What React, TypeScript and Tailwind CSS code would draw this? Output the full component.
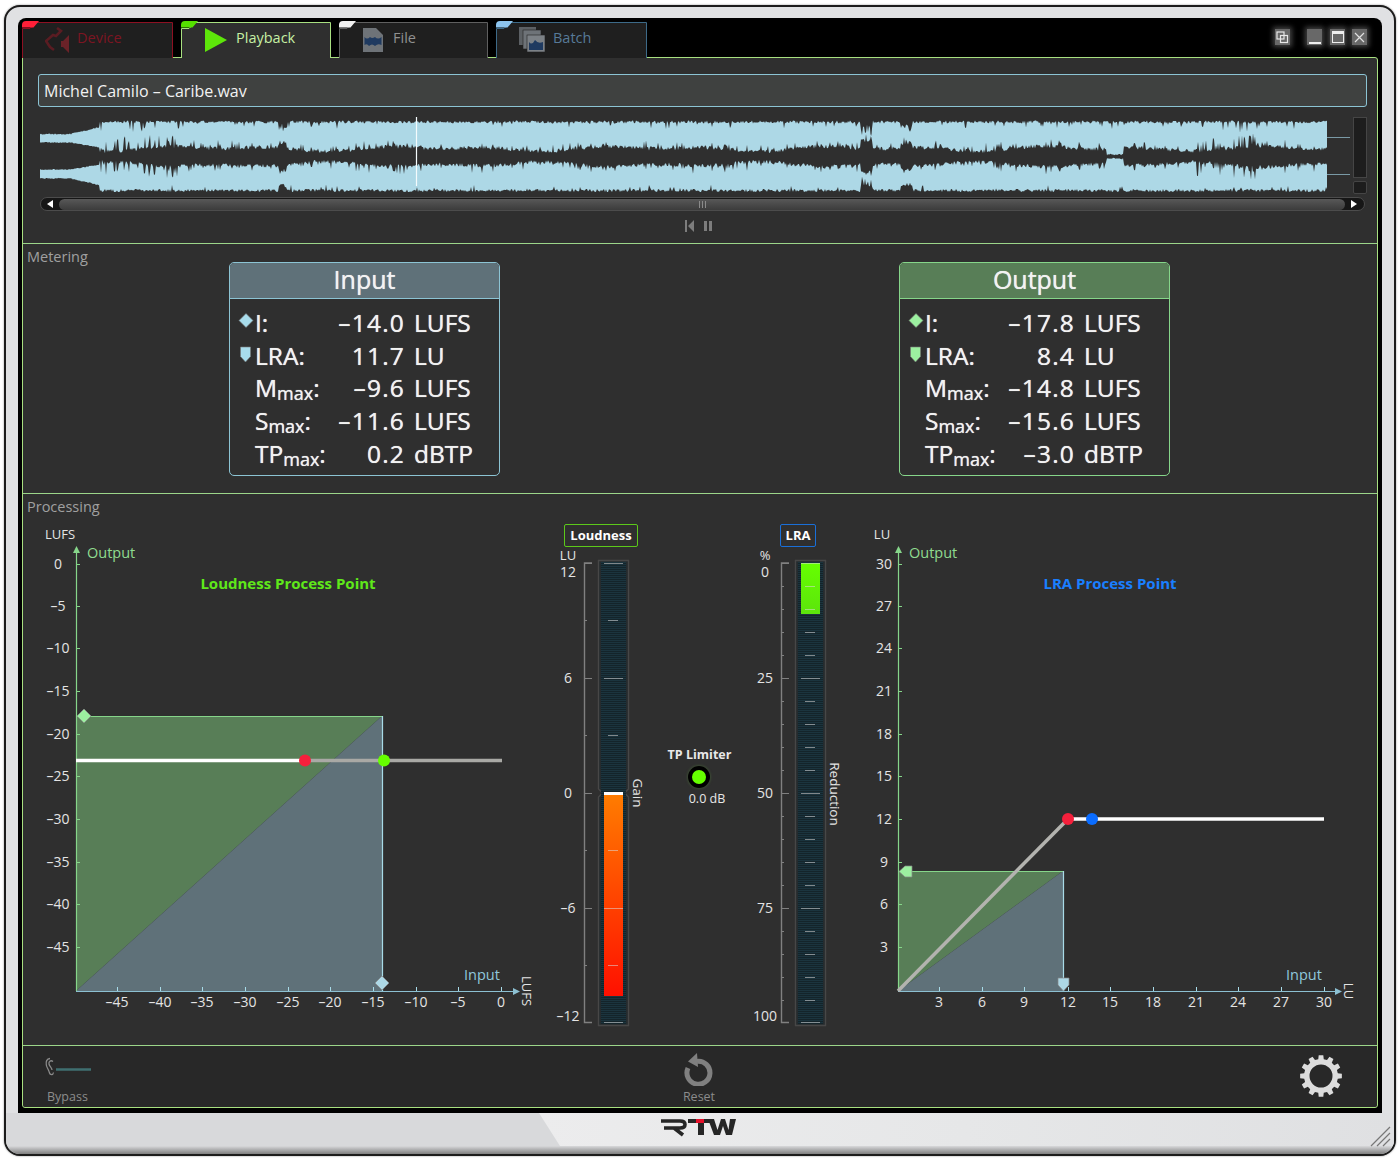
import type { ReactNode } from "react";

// seeded random so the waveform looks the same on every load
function makeRand(seed: number) {
  let s = seed;
  return () => {
    s = (s + 0x6d2b79f5) | 0;
    let t = Math.imul(s ^ (s >>> 15), 1 | s);
    t = (t + Math.imul(t ^ (t >>> 7), 61 | t)) ^ t;
    return ((t ^ (t >>> 14)) >>> 0) / 4294967296;
  };
}

function waveformPaths() {
  const rand = makeRand(42);
  const a: number[][] = [];
  for (let x = 40; x <= 1327; x++) {
    let top = 0, inner1 = 0, inner2 = 0, bottom = 0;
    if (x < 100) {
      const k = x < 70 ? 0 : (x - 70) / 30;
      top = 133.5 - k * 7 + rand() * 1.2;
      inner1 = 142 + k * 5 + rand();
      inner2 = 170 - k * 5 - rand();
      bottom = 179 + k * 7 - rand() * 1.2;
    } else {
      const slow = 6 + 2.8 * Math.sin(x / 23) * Math.sin(x / 71);
      const spikyZone = (x > 1195 && x < 1262) || (x > 100 && x < 180);
      top = 120.5 + rand() * 3;
      bottom = 192 - rand() * 3;
      inner1 = 156.5 - slow - rand() * 4;
      inner2 = 156.5 + slow + rand() * 4;
      if (rand() < (spikyZone ? 0.3 : 0.14)) {
        inner1 -= 2 + rand() * (spikyZone ? 11 : 5);
        inner2 += 2 + rand() * (spikyZone ? 11 : 5);
      }
      if (rand() < (spikyZone ? 0.18 : 0.06)) top += 2 + rand() * (spikyZone ? 8 : 5);
      if (rand() < 0.06) bottom -= rand() * 5;
      if (x > 1106 && x < 1124) {
        inner1 = 155.5 - rand() * 2;
        inner2 = 157.5 + rand() * 2;
      }
      const notch = x >= 279 && x <= 286 ? 0.7 : x >= 861 && x <= 872 ? 1 : x >= 901 && x <= 912 ? 0.6 : 0;
      if (notch) {
        top += notch * 12 * rand() + notch * 3;
        inner1 -= notch * 8;
        inner2 += notch * 8;
        bottom -= notch * 9 * rand() + notch * 3;
      }
    }
    a.push([x, top, inner1, inner2, bottom]);
  }
  const upper =
    "M" + a.map((p) => `${p[0]} ${p[1].toFixed(1)}`).join("L") +
    "L" + a.slice().reverse().map((p) => `${p[0]} ${p[2].toFixed(1)}`).join("L") + "Z";
  const lower =
    "M" + a.map((p) => `${p[0]} ${p[3].toFixed(1)}`).join("L") +
    "L" + a.slice().reverse().map((p) => `${p[0]} ${p[4].toFixed(1)}`).join("L") + "Z";
  return { upper, lower };
}

const wave = waveformPaths();

function gearPath(cx: number, cy: number) {
  const teeth = 12;
  const outer = 21;
  const root = 17;
  const pts: string[] = [];
  for (let i = 0; i < teeth; i++) {
    const c = (i / teeth) * Math.PI * 2;
    const w = Math.PI / teeth;
    [
      [root, c - w * 0.62],
      [outer, c - w * 0.42],
      [outer, c + w * 0.42],
      [root, c + w * 0.62],
    ].forEach(([r, t]) => pts.push(`${(cx + r * Math.cos(t)).toFixed(2)} ${(cy + r * Math.sin(t)).toFixed(2)}`));
  }
  return "M" + pts.join("L") + "Z";
}

function Tab({
  label,
  width,
  stroke,
  fill,
  flag,
  className,
  icon,
}: {
  label: string;
  width: number;
  stroke: string;
  fill: string;
  flag: string;
  className: string;
  icon: ReactNode;
}) {
  const h = 36;
  return (
    <div className={className}>
      <svg className="absolute left-0 top-[-1px] overflow-visible" width={width} height={h + 1}>
        <path d={`M.5 ${h + 1}V7.5H8L14 1.5H${width - 0.5}V${h + 1}`} fill={fill} stroke={stroke} />
        <path d="M0 7V4Q0 0 4 0H17L11.5 6.5H0Z" fill={flag} />
      </svg>
      <div className="relative flex items-center h-full">
        {icon}
        <span className="mb-[3px]">{label}</span>
      </div>
    </div>
  );
}

function WindowButton({ children }: { children: ReactNode }) {
  return (
    <div className="w-[15px] h-[16px] bg-[#686868] shadow-[0_0_5px_2px_#444] flex items-center justify-center">
      {children}
    </div>
  );
}

function Marker({ kind, color }: { kind: "diamond" | "pen"; color: string }) {
  return (
    <svg className="absolute left-[-17px] top-[6px]" width="16" height="17" viewBox="0 0 16 17">
      {kind === "diamond" ? (
        <path d="M8 .5L15 7.5 8 14.5 1 7.5Z" fill={color} stroke="#777" strokeWidth=".6" />
      ) : (
        <path d="M2.5 1H12.5V10.5L7.5 16 2.5 10.5Z" fill={color} stroke="#777" strokeWidth=".6" />
      )}
    </svg>
  );
}

function Row({
  label,
  sub,
  value,
  unit,
  marker,
}: {
  label: string;
  sub?: string;
  value: string;
  unit: string;
  marker?: ReactNode;
}) {
  return (
    <div className="flex h-[32.7px] leading-[32.7px]">
      <div className="relative w-[80px] whitespace-nowrap">
        {marker}
        {label}
        {sub && <span className="text-[18px] align-[-3px]">{sub}</span>}:
      </div>
      <div className="w-[70px] text-right whitespace-nowrap tracking-[1.2px]">{value}</div>
      <div className="ml-[9px] whitespace-nowrap">{unit}</div>
    </div>
  );
}

function ResultCard({
  title,
  values,
  markerColor,
  className,
  headClassName,
}: {
  title: string;
  values: string[];
  markerColor: string;
  className: string;
  headClassName: string;
}) {
  return (
    <div className={className}>
      <div className={headClassName}>{title}</div>
      <div className="pl-[25px] pt-[8px] text-[24.5px] text-[#f2f2f2] [text-shadow:0_0_.7px_#f2f2f2]">
        <Row label="I" value={values[0]} unit="LUFS" marker={<Marker kind="diamond" color={markerColor} />} />
        <Row label="LRA" value={values[1]} unit="LU" marker={<Marker kind="pen" color={markerColor} />} />
        <Row label="M" sub="max" value={values[2]} unit="LUFS" />
        <Row label="S" sub="max" value={values[3]} unit="LUFS" />
        <Row label="TP" sub="max" value={values[4]} unit="dBTP" />
      </div>
    </div>
  );
}

const tickText = "fill-[#e4e4e4] text-[14px]";

function Chart({
  view,
  width,
  axisX,
  xEnd,
  yTicks,
  xTicks,
  yLabelX,
  unitTop,
  unitTopX,
  unitSide,
  unitSideX,
  outputX,
  title,
  titleX,
  titleClass,
  inputX,
  rectRight,
  rectTop,
  children,
}: {
  view: string;
  width: number;
  axisX: number;
  xEnd: number;
  yTicks: [string, number][];
  xTicks: [string, number][];
  yLabelX: number;
  unitTop: string;
  unitTopX: number;
  unitSide: string;
  unitSideX: number;
  outputX: number;
  title: string;
  titleX: number;
  titleClass: string;
  inputX: number;
  rectRight: number;
  rectTop: number;
  children: ReactNode;
}) {
  const base = 991;
  return (
    <svg width={width} height={520} viewBox={view} className="shrink-0">
      <path d={`M${axisX} ${base}V${rectTop}H${rectRight}Z`} fill="#587e57" />
      <path d={`M${axisX} ${base}H${rectRight}V${rectTop}Z`} fill="#5f7179" />
      <path d={`M${axisX + 0.5} ${base}V548`} stroke="#86d68a" strokeWidth="1.2" fill="none" />
      <path d={`M${axisX + 0.5} 546l-3.5 7h7z`} fill="#86d68a" />
      <path d={`M${axisX} ${rectTop + 0.5}H${rectRight}`} stroke="#86d68a" strokeWidth="1.2" />
      <path d={`M${rectRight + 0.5} ${rectTop}V${base}`} stroke="#a8dbe8" strokeWidth="1.2" />
      <path d={`M${axisX} ${base + 0.5}H${xEnd - 4}`} stroke="#8cc0d2" strokeWidth="1.2" />
      <path d={`M${xEnd} ${base + 0.5}l-7 -3.5v7z`} fill="#8cc0d2" />
      {yTicks.map(([t, y]) => (
        <g key={t}>
          <path d={`M${axisX} ${y + 0.5}h4`} stroke="#86d68a" />
          <text x={yLabelX} y={y - 1} textAnchor="middle" dominantBaseline="central" className={tickText}>
            {t}
          </text>
        </g>
      ))}
      {xTicks.map(([t, x]) => (
        <g key={t}>
          <path d={`M${x + 0.5} ${base}v-4`} stroke="#a8dbe8" />
          <text x={x} y={1001} textAnchor="middle" dominantBaseline="central" className={tickText}>
            {t}
          </text>
        </g>
      ))}
      <text x={unitTopX} y={534} textAnchor="middle" dominantBaseline="central" className="fill-[#e4e4e4] text-[13px]">
        {unitTop}
      </text>
      <text x={outputX} y={552} dominantBaseline="central" className="fill-[#8fdc8f] text-[14.5px]">
        Output
      </text>
      <text x={titleX} y={583} textAnchor="middle" dominantBaseline="central" className={titleClass}>
        {title}
      </text>
      <text x={inputX} y={974} dominantBaseline="central" className="fill-[#8fc8dc] text-[14.5px]">
        Input
      </text>
      <text
        x={unitSideX}
        y={991}
        textAnchor="middle"
        dominantBaseline="central"
        transform={`rotate(90 ${unitSideX} 991)`}
        className="fill-[#e4e4e4] text-[13px]"
      >
        {unitSide}
      </text>
      {children}
    </svg>
  );
}

function Meter({
  view,
  width,
  scaleX,
  labels,
  minor,
  notch,
  fill,
  fillGrad,
  side,
  sideY,
  unit,
}: {
  view: string;
  width: number;
  scaleX: number;
  labels: [string, number][];
  minor: number[];
  notch: boolean;
  fill: [number, number];
  fillGrad: string;
  side: string;
  sideY: number;
  unit: string;
}) {
  const tx = scaleX + 14;
  const labelX = scaleX - 16;
  const textY = (v: number) => (v === 563 ? 571 : v === 1022 ? 1015 : v - 1);
  const fillD = `M${tx + 6} ${fill[0]}h19V${fill[1]}h-19Z`;
  const tube = notch
    ? `M${tx + 0.5} 560.5H${tx + 30.5}V789L${tx + 26.5} 793 ${tx + 30.5} 797V1025.5H${tx + 0.5}V797L${tx + 4.5} 793 ${tx + 0.5} 789Z`
    : `M${tx + 0.5} 560.5H${tx + 30.5}V1025.5H${tx + 0.5}Z`;
  return (
    <svg width={width} height={490} viewBox={view} className="block">
      <text x={labelX} y={555} textAnchor="middle" dominantBaseline="central" className="fill-[#e4e4e4] text-[13px]">
        {unit}
      </text>
      <path d={`M${scaleX + 8} 563H${scaleX + 0.5}V1022.5H${scaleX + 8}`} fill="none" stroke="#808080" strokeWidth="1.4" />
      {labels.map(([t, y]) => (
        <g key={t}>
          <path d={`M${scaleX} ${y + 0.5}h8`} stroke="#808080" />
          <text x={labelX} y={textY(y)} textAnchor="middle" dominantBaseline="central" className={tickText}>
            {t}
          </text>
        </g>
      ))}
      {minor.map((y) => (
        <path key={y} d={`M${scaleX} ${y + 0.5}h3`} stroke="#808080" />
      ))}
      <path d={tube} fill="#252b2e" stroke="#474747" strokeWidth="1.4" />
      <rect x={tx + 3} y={562} width={25} height={462} fill="#14242a" />
      <rect x={tx + 3} y={562} width={25} height={462} fill="url(#scan)" />
      <path d={fillD} fill={`url(#${fillGrad})`} />
      {labels.map(([t, y]) => (
        <path key={t} d={`M${tx + 6} ${y + 0.5}h19`} stroke="#d8d8d8" strokeOpacity=".55" />
      ))}
      {minor.map((y) => (
        <path key={y} d={`M${tx + 10} ${y + 0.5}h10`} stroke="#d8d8d8" strokeOpacity=".55" />
      ))}
      {notch && <rect x={tx + 6} y={792} width={19} height={3} fill="#ffffff" />}
      <text
        x={tx + 40}
        y={sideY}
        textAnchor="middle"
        dominantBaseline="central"
        transform={`rotate(90 ${tx + 40} ${sideY})`}
        className="fill-[#e4e4e4] text-[13.5px]"
      >
        {side}
      </text>
    </svg>
  );
}

const lufsY: [string, number][] = [
  ["0", 564], ["–5", 606], ["–10", 648], ["–15", 691], ["–20", 734],
  ["–25", 776], ["–30", 819], ["–35", 862], ["–40", 904], ["–45", 947],
];
const lufsX: [string, number][] = [
  ["–45", 117], ["–40", 160], ["–35", 202], ["–30", 245], ["–25", 288],
  ["–20", 330], ["–15", 373], ["–10", 416], ["–5", 458], ["0", 501],
];
const luY: [string, number][] = [
  ["30", 564], ["27", 606], ["24", 648], ["21", 691], ["18", 734],
  ["15", 776], ["12", 819], ["9", 862], ["6", 904], ["3", 947],
];
const luX: [string, number][] = [
  ["3", 939], ["6", 982], ["9", 1024], ["12", 1068], ["15", 1110],
  ["18", 1153], ["21", 1196], ["24", 1238], ["27", 1281], ["30", 1324],
];

export default function App() {
  return (
    <div className="w-[1400px] h-[1160px] bg-white pt-[5px] pl-[4px] font-medium font-['Open_Sans','Noto_Sans',sans-serif]">
      <svg width="0" height="0" className="absolute">
        <defs>
          <pattern id="scan" width="4" height="2" patternUnits="userSpaceOnUse">
            <rect width="4" height="1" fill="#1b343e" />
          </pattern>
          <linearGradient id="gainFill" x1="0" y1="0" x2="0" y2="1">
            <stop offset="0" stopColor="#ff7d00" />
            <stop offset="1" stopColor="#ff1000" />
          </linearGradient>
          <linearGradient id="lraFill" x1="0" y1="0" x2="0" y2="1">
            <stop offset="0" stopColor="#66ff00" />
            <stop offset="1" stopColor="#5ce40c" />
          </linearGradient>
        </defs>
      </svg>

      <div className="relative w-[1392px] h-[1151px] rounded-[16px] border-2 border-[#1c1c1c] bg-[#e0e1e3] overflow-hidden shadow-[0_0_2px_#888]">
        <div className="h-[11px]" />
        <div className="mx-[12px] h-[1095px] bg-black rounded-t-[8px] px-[4px] flex flex-col">
          {/* tab row */}
          <div className="h-[39px] shrink-0 pt-[4px] flex gap-[8px] text-[14.5px]">
            <Tab
              label="Device"
              width={151}
              stroke="#8d1022"
              fill="#1f1f1f"
              flag="#ff1f38"
              className="relative w-[151px] h-[35px] pl-[23px] text-[#7c1522]"
              icon={
                <svg width="25" height="26" viewBox="0 0 25 26" className="mr-[7px]">
                  <path d="M12 1L16 4 11 9 8 8 1 14 5 20 9 23" fill="none" stroke="#5a1c22" strokeWidth="2.6" />
                  <path d="M16 14H18L24 8V26L18 20H16Z" fill="#6b2228" />
                </svg>
              }
            />
            <Tab
              label="Playback"
              width={150}
              stroke="#a8e080"
              fill="#2f2f2f"
              flag="#55e000"
              className="relative w-[150px] h-[35px] pl-[24px] text-[#c6f0a4] z-10"
              icon={
                <svg width="22" height="24" viewBox="0 0 22 24" className="mr-[9px]">
                  <path d="M0 0L22 12 0 24Z" fill="#5de60a" />
                </svg>
              }
            />
            <Tab
              label="File"
              width={149}
              stroke="#5f5f5f"
              fill="#1f1f1f"
              flag="#f0f0f0"
              className="relative w-[149px] h-[35px] pl-[24px] text-[#909090]"
              icon={
                <svg width="20" height="24" viewBox="0 0 20 24" className="mr-[10px]">
                  <path d="M0 0H13L20 7V24H0Z" fill="#6e7378" />
                  <path d="M1.5 9Q4 12 7 9 9 11 12 9 15 12 18.5 9V17Q15 15 12 18 9 15 6 18 4 15 1.5 17Z" fill="#1f3a60" />
                </svg>
              }
            />
            <Tab
              label="Batch"
              width={151}
              stroke="#3d6a88"
              fill="#1f1f1f"
              flag="#8cc4ee"
              className="relative w-[151px] h-[35px] pl-[23px] text-[#577a98]"
              icon={
                <svg width="26" height="25" viewBox="0 0 26 25" className="mr-[8px]">
                  <rect x="0" y="0" width="17" height="18" fill="#5c6064" />
                  <rect x="4" y="3" width="18" height="19" fill="#6e7378" stroke="#222" strokeWidth=".6" />
                  <rect x="8" y="8" width="18" height="17" fill="#7c8186" stroke="#222" strokeWidth=".6" />
                  <path d="M10 15Q13 19 16 13 19 17 24 15V23H10Z" fill="#1f3a60" />
                </svg>
              }
            />
            <div className="ml-auto mr-[11px] h-[30px] flex items-center">
              <WindowButton>
                <svg width="13" height="13" viewBox="0 0 13 13" fill="none" stroke="#e8e8e8" strokeWidth="1.2">
                  <rect x="1" y="1" width="7" height="7" />
                  <rect x="4.5" y="4.5" width="7" height="7" />
                </svg>
              </WindowButton>
              <div className="ml-[17px]">
                <WindowButton>
                  <div className="w-[12px] h-[2px] bg-[#eeeeee] mt-[11px]" />
                </WindowButton>
              </div>
              <div className="ml-[8px]">
                <WindowButton>
                  <div className="w-[12px] h-[12px] border border-[#eeeeee] border-t-[3px]" />
                </WindowButton>
              </div>
              <div className="ml-[7px]">
                <WindowButton>
                  <svg width="11" height="11" viewBox="0 0 11 11" stroke="#e0e0e0" strokeWidth="1.2">
                    <path d="M1 1L10 10M10 1L1 10" />
                  </svg>
                </WindowButton>
              </div>
            </div>
          </div>

          {/* main panel */}
          <div className="h-[1051px] shrink-0 border border-[#a8e080] rounded-b-[3px] rounded-tr-[3px] bg-[#2f2f2f] flex flex-col">
            {/* player */}
            <div className="h-[186px] shrink-0 border-b border-[#9cd68a] pt-[16px] pl-[15px] pr-[10px]">
              <div className="h-[33px] rounded-[3px] border border-[#8cc4d4] bg-[#3f4140] pl-[5px] text-[16px] leading-[32px] text-[#f2f2f2]">
                Michel Camilo – Caribe.wav
              </div>
              <div className="mt-[10px] h-[78px] flex">
                <svg width="1312" height="78" viewBox="38 117 1312 78" className="shrink-0">
                  <path d={wave.upper} fill="#add8e6" />
                  <path d={wave.lower} fill="#add8e6" />
                  <path d="M1327 137.5H1350M1327 174.5H1350" stroke="#7a9aa6" />
                  <path d="M416.5 117V186" stroke="#f4fbfd" strokeWidth="1.2" />
                </svg>
                <div className="ml-[3px] w-[14px] flex flex-col gap-[3px]">
                  <div className="h-[61px] border border-[#454545] bg-[#1d1d1d]" />
                  <div className="h-[13px] rounded-[2px] border border-[#454545] bg-[#1d1d1d]" />
                </div>
              </div>
              <div className="mt-[2px] ml-[2px] w-[1325px] h-[14px] rounded-full border border-[#4c4c4c] bg-[#161616] flex items-center">
                <div className="w-[18px] flex justify-center">
                  <div className="w-0 h-0 border-y-[4px] border-y-transparent border-r-[6px] border-r-white" />
                </div>
                <div className="w-[1286px] h-[11px] rounded-full bg-gradient-to-b from-[#585858] to-[#3c3c3c] flex items-center justify-center gap-[2px]">
                  <div className="w-px h-[7px] bg-[#8a8a8a]" />
                  <div className="w-px h-[7px] bg-[#8a8a8a]" />
                  <div className="w-px h-[7px] bg-[#8a8a8a]" />
                </div>
                <div className="w-[18px] flex justify-center">
                  <div className="w-0 h-0 border-y-[4px] border-y-transparent border-l-[6px] border-l-white" />
                </div>
              </div>
              <div className="mt-[9px] flex items-center justify-center gap-[10px] pr-[8px]">
                <svg width="9" height="12" viewBox="0 0 9 12">
                  <path d="M0 0H2V12H0ZM9 0V12L3 6Z" fill="#7d7d7d" />
                </svg>
                <svg width="8" height="12" viewBox="0 0 8 12">
                  <path d="M0 1H3V11H0ZM5 1H8V11H5Z" fill="#7d7d7d" />
                </svg>
              </div>
            </div>

            {/* metering */}
            <div className="h-[250px] shrink-0 border-b border-[#9cd68a] flex">
              <div className="w-[206px] pl-[4px] pt-[2px] text-[14.5px] text-[#a0a0a0]">Metering</div>
              <div className="pt-[18px] flex gap-[399px]">
                <ResultCard
                  title="Input"
                  values={["–14.0", "11.7", "–9.6", "–11.6", "0.2"]}
                  markerColor="#a8dcec"
                  className="w-[271px] h-[214px] rounded-[5px] border border-[#8cc4d4] overflow-hidden"
                  headClassName="h-[36px] bg-[#5f7179] border-b border-[#8cc4d4] text-center text-[25px] leading-[32px] text-[#f2f2f2] [text-shadow:0_0_.7px_#f2f2f2]"
                />
                <ResultCard
                  title="Output"
                  values={["–17.8", "8.4", "–14.8", "–15.6", "–3.0"]}
                  markerColor="#9cf0a0"
                  className="w-[271px] h-[214px] rounded-[5px] border border-[#86d68a] overflow-hidden"
                  headClassName="h-[36px] bg-[#587e57] border-b border-[#86d68a] text-center text-[25px] leading-[32px] text-[#f2f2f2] [text-shadow:0_0_.7px_#f2f2f2]"
                />
              </div>
            </div>

            {/* processing */}
            <div className="h-[552px] shrink-0 border-b border-[#9cd68a]">
              <div className="h-[20px] pl-[4px] pt-[4px] text-[14.5px] leading-[18px] text-[#a0a0a0]">Processing</div>
              <div className="flex h-[520px]">
                <Chart
                  view="23 514 522 520"
                  width={522}
                  axisX={76}
                  xEnd={520}
                  yTicks={lufsY}
                  xTicks={lufsX}
                  yLabelX={58}
                  unitTop="LUFS"
                  unitTopX={60}
                  unitSide="LUFS"
                  unitSideX={527}
                  outputX={87}
                  title="Loudness Process Point"
                  titleX={288}
                  titleClass="fill-[#5fe81a] text-[15px] font-bold"
                  inputX={464}
                  rectRight={382}
                  rectTop={716}
                >
                  <path d="M84 709L91 716 84 723 77 716Z" fill="#9cf0a0" stroke="#888" strokeWidth=".7" />
                  <path d="M382 976L389 983 382 990 375 983Z" fill="#add8e6" stroke="#888" strokeWidth=".7" />
                  <path d="M305 760.5H502" stroke="#a9a9a5" strokeWidth="3.5" />
                  <path d="M76 760.5H305" stroke="#ffffff" strokeWidth="3.5" />
                  <circle cx="305" cy="760.5" r="6" fill="#f5203c" />
                  <circle cx="384" cy="760.5" r="6" fill="#66ff00" />
                </Chart>

                <div className="w-[115px] shrink-0">
                  <div className="mt-[10px] ml-[19px] w-[74px] h-[23px] rounded-[2px] border-[1.5px] border-[#5cc81a] text-center text-[13px] leading-[20px] font-bold text-white">
                    Loudness
                  </div>
                  <div className="mt-[-3px]">
                    <Meter
                      view="545 544 115 490"
                      width={115}
                      scaleX={584}
                      labels={[["12", 563], ["6", 678], ["0", 793], ["–6", 908], ["–12", 1022]]}
                      minor={[620, 735, 850, 965]}
                      notch
                      fill={[793, 996]}
                      fillGrad="gainFill"
                      side="Gain"
                      sideY={793}
                      unit="LU"
                    />
                  </div>
                </div>

                <div className="w-[85px] shrink-0 pt-[233px] text-[12.5px] text-[#e8e8e8]">
                  <div className="ml-[7px] w-[65px] h-[16px] leading-[16px] text-center font-bold whitespace-nowrap">TP Limiter</div>
                  <div className="mt-[3px] ml-[28px] w-[22px] h-[22px] rounded-full bg-black flex items-center justify-center shadow-[0_0_3px_#4a6a3a]">
                    <div className="w-[14px] h-[14px] rounded-full bg-[#66ff00]" />
                  </div>
                  <div className="mt-[3px] ml-[27px] w-[40px] h-[16px] leading-[16px] text-center whitespace-nowrap">0.0 dB</div>
                </div>

                <div className="w-[105px] shrink-0">
                  <div className="mt-[10px] ml-[35px] w-[36px] h-[23px] rounded-[2px] border-[1.5px] border-[#1a6fd8] text-center text-[13px] leading-[20px] font-bold text-white">
                    LRA
                  </div>
                  <div className="mt-[-3px]">
                    <Meter
                      view="745 544 105 490"
                      width={105}
                      scaleX={781}
                      labels={[["0", 563], ["25", 678], ["50", 793], ["75", 908], ["100", 1022]]}
                      minor={[586, 609, 632, 655, 701, 724, 747, 770, 816, 839, 862, 885, 931, 954, 977, 1000]}
                      notch={false}
                      fill={[563, 614]}
                      fillGrad="lraFill"
                      side="Reduction"
                      sideY={794}
                      unit="%"
                    />
                  </div>
                </div>

                <Chart
                  view="850 514 527 520"
                  width={527}
                  axisX={898}
                  xEnd={1342}
                  yTicks={luY}
                  xTicks={luX}
                  yLabelX={884}
                  unitTop="LU"
                  unitTopX={882}
                  unitSide="LU"
                  unitSideX={1349}
                  outputX={909}
                  title="LRA Process Point"
                  titleX={1110}
                  titleClass="fill-[#1a7fff] text-[15px] font-bold"
                  inputX={1286}
                  rectRight={1063}
                  rectTop={871}
                >
                  <path d="M899 871.5L905 866H912V877H905Z" fill="#9cf0a0" stroke="#888" strokeWidth=".7" />
                  <path d="M1058 978H1069V985L1063.5 991 1058 985Z" fill="#add8e6" stroke="#888" strokeWidth=".7" />
                  <path d="M898 991L1068 819" stroke="#b3b3af" strokeWidth="3.5" />
                  <path d="M1068 819H1324" stroke="#ffffff" strokeWidth="3.5" />
                  <circle cx="1068" cy="819" r="6" fill="#f5203c" />
                  <circle cx="1092" cy="819" r="6" fill="#0a6cff" />
                </Chart>
              </div>
            </div>

            {/* bottom controls */}
            <div className="h-[61px] shrink-0 bg-[#282828] rounded-b-[3px] grid grid-cols-3 text-[12.5px] text-[#8c8c8c]">
              <div className="pl-[22px] pt-[11px]">
                <svg width="48" height="20" viewBox="0 0 48 20">
                  <path
                    d="M5 1.5C1.5 1.5 .8 5 1.3 8 1.8 11 4 13 4.5 16 5 18 8 18.5 8.5 15.5 M8 4.5C6 3 3.5 4 4 7 4.5 9.5 7 10.5 7 13"
                    fill="none"
                    stroke="#8a8a8a"
                    strokeWidth="1.3"
                  />
                  <path d="M11 12.5H46" stroke="#3f6f70" strokeWidth="2.4" />
                </svg>
                <div className="pl-[2px] mt-[12px] leading-[16px]">Bypass</div>
              </div>
              <div className="flex flex-col items-center pt-[7px] pr-[2px]">
                <svg width="30" height="33" viewBox="0 0 30 33">
                  <path d="M4 15A11.5 11.5 0 1 0 13 8.4" fill="none" stroke="#808080" strokeWidth="5" />
                  <path d="M13 0L4 8.5 14 14Z" fill="#808080" />
                </svg>
                <div className="mt-[3px] leading-[16px]">Reset</div>
              </div>
              <div className="flex justify-end pt-[9px] pr-[35px]">
                <svg width="42" height="42" viewBox="0 0 42 42">
                  <path d={gearPath(21, 21) + "M21 9.5A11.5 11.5 0 1 0 21 32.5 11.5 11.5 0 1 0 21 9.5Z"} fill="#dcdcdc" fillRule="evenodd" />
                </svg>
              </div>
            </div>
          </div>
          <div className="h-[5px]" />
        </div>

        {/* RTW strip */}
        <div className="relative h-[33px] flex justify-center pt-[6px] pr-[4px] bg-[#d8d9db]">
          <div className="absolute left-[533px] top-0 w-[855px] h-[33px] bg-gradient-to-r from-[#ececed] via-[#e6e7e8] to-[#dfe0e2] [clip-path:polygon(0_0,100%_0,100%_100%,21px_100%)]" />
          <svg width="76" height="18" viewBox="661 1119 76 18" className="relative">
            <path d="M662 1121H681Q686 1121 686 1124.5 686 1128 681 1128H665M675 1128L684 1135" fill="none" stroke="#262626" strokeWidth="3.6" />
            <path d="M689 1119H713V1123H705V1135H699V1123H689Z" fill="#262626" />
            <path d="M697 1119H705V1123H697Z" fill="#e5102a" />
            <path d="M709 1119H715L718.5 1130 722 1119H726L729.5 1130 731 1119H737L733 1135H727L724 1126 721 1135H715Z" fill="#262626" />
          </svg>
          <svg width="22" height="22" viewBox="0 0 22 22" className="absolute right-[2px] top-[13px]" stroke="#777" strokeWidth="1.2">
            <path d="M1 20L20 1M7 20L20 7M13 20L20 13" />
          </svg>
        </div>
        <div className="h-[8px] bg-gradient-to-b from-[#d8d9db] to-[#7f7f7f]" />
      </div>
    </div>
  );
}
